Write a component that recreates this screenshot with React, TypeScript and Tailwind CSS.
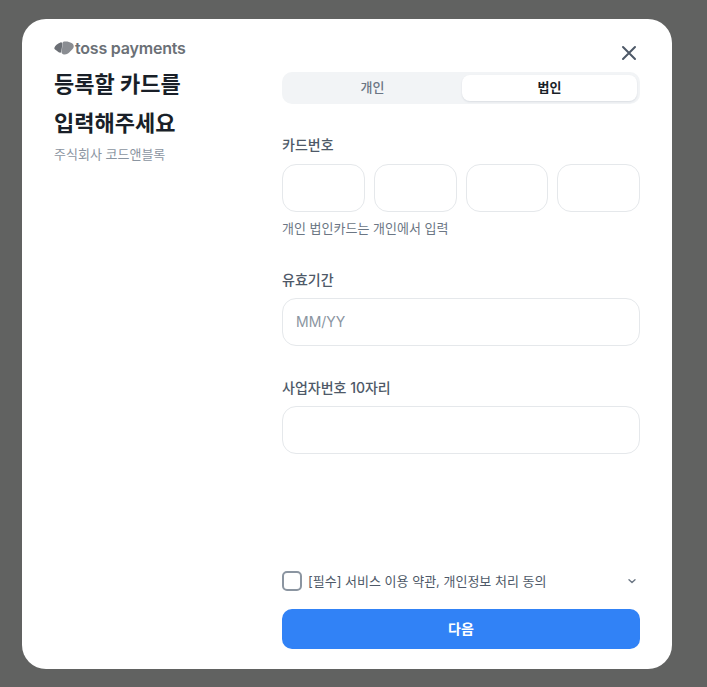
import React from 'react';

const font = { fontFamily: '"Inter", "Noto Sans CJK KR", sans-serif' };

const CardBox = () => <div className="h-12 flex-1 rounded-[14px] border border-[#e5e8eb] bg-white" />;

const App = () => {
  return (
    <div
      style={font}
      className="flex h-[687px] w-[707px] items-start overflow-hidden bg-[#616261] pl-[22px] pt-[19px] [font-family:Inter,'Noto_Sans_CJK_KR',sans-serif]"
    >
      <div className="flex h-[650px] w-[650px] flex-col rounded-[24px] bg-white pl-8 pr-8 pt-5 pb-5">
        <div className="flex h-[21px] items-start justify-between">
          <div className="flex h-4 items-center gap-[1px] pt-[1px] mt-0">
            <svg width="20" height="16" viewBox="0 0 20 16">
              <path d="M0.3 8 C1 5.5 3.5 3.5 6.5 2.4 C7.6 2 8.6 3 8.4 4 L7.2 12.5 C5.5 13 4.5 12.3 3.4 11.3 C2.4 10.4 0 9.4 0.3 8 Z" fill="#6b6f75" />
              <path d="M8.8 2 C11.5 1 15.2 1.6 17.6 3 C19.3 4 20 5.6 19.7 7 C19.3 9 17.6 9.8 16.6 11 C15.4 12.6 12.6 14.8 10 14.6 C8.6 14.5 7.8 13.6 7.6 12.6 Z" fill="#8a8d92" />
            </svg>
            <span className="text-[16px] leading-4 font-semibold tracking-[-0.2px] text-[#6b7076]">toss payments</span>
          </div>
          <button className="mt-[3px] flex h-[22px] w-[22px] items-center justify-center">
            <svg width="16" height="16" viewBox="0 0 16 16" fill="none" stroke="#4e5968" strokeWidth="2" strokeLinecap="round">
              <path d="M2 2L14 14M14 2L2 14" />
            </svg>
          </button>
        </div>

        <div className="flex flex-1 pt-[1px]">
          <div className="w-[228px] shrink-0">
            <h1 className="mt-[4px] text-[22px] leading-[39px] font-bold text-[#191f28]">
              등록할 카드를
              <br />
              입력해주세요
            </h1>
            <p className="mt-[1px] text-[13px] leading-5 text-[#8b95a1]">주식회사 코드앤블록</p>
          </div>

          <div className="flex flex-1 flex-col">
            <div className="mt-[11px] flex h-8 gap-0 rounded-[10px] bg-[#f2f4f6] p-[3px]">
              <button className="flex-1 pr-[2px] text-[13px] font-medium text-[#6b7684]">개인</button>
              <button className="flex-1 rounded-lg bg-white text-[13px] font-bold text-[#191f28] shadow-[0_1px_2px_rgba(0,27,55,0.1)]">
                법인
              </button>
            </div>

            <label className="mt-[31px] block text-sm leading-[20px] font-medium text-[#4e5968]">카드번호</label>
            <div className="mt-[9px] flex gap-[9px]">
              <CardBox />
              <CardBox />
              <CardBox />
              <CardBox />
            </div>
            <p className="mt-[6px] text-[13px] leading-5 text-[#6b7684]">개인 법인카드는 개인에서 입력</p>

            <label className="mt-[32px] block text-sm leading-[20px] font-medium text-[#4e5968]">유효기간</label>
            <div className="mt-2 flex h-12 items-center rounded-[14px] border border-[#e5e8eb] bg-white px-[13px] text-sm text-[#8b95a1]">
              MM/YY
            </div>

            <label className="mt-[32px] block text-sm leading-[20px] font-medium text-[#4e5968]">사업자번호 10자리</label>
            <div className="mt-2 h-12 rounded-[14px] border border-[#e5e8eb] bg-white" />

            <div className="mt-auto flex h-5 items-center">
              <span className="h-5 w-5 rounded-[5px] border-2 border-[#8b95a1] bg-white" />
              <span className="ml-[6px] flex-1 text-[13px] leading-5 text-[#4e5968]">[필수] 서비스 이용 약관, 개인정보 처리 동의</span>
              <svg className="mr-[3px]" width="10" height="10" viewBox="0 0 10 10" fill="none" stroke="#6b7684" strokeWidth="1.4" strokeLinecap="round" strokeLinejoin="round">
                <path d="M2 3.8L5 6.6L8 3.8" />
              </svg>
            </div>
            <button className="mt-[18px] h-10 rounded-[10px] bg-[#3182f6] text-sm font-semibold text-white">다음</button>
          </div>
        </div>
      </div>
    </div>
  );
};

export default App;
